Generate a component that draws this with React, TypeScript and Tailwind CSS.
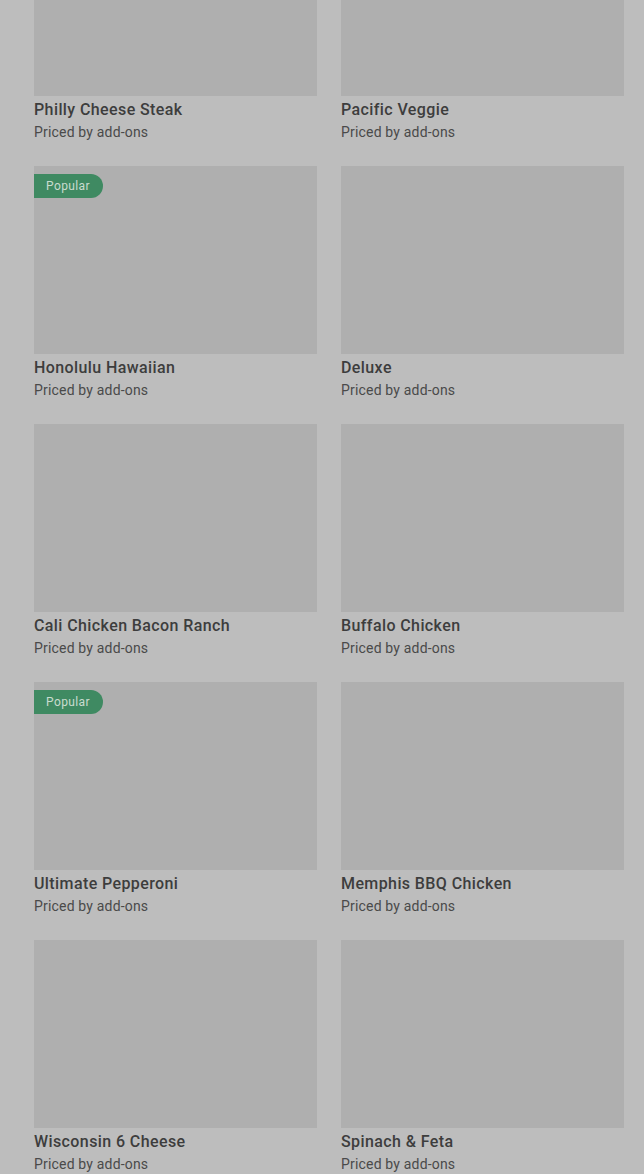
import React from "react";

const items = [
  { name: "Philly Cheese Steak", popular: false },
  { name: "Pacific Veggie", popular: false },
  { name: "Honolulu Hawaiian", popular: true },
  { name: "Deluxe", popular: false },
  { name: "Cali Chicken Bacon Ranch", popular: false },
  { name: "Buffalo Chicken", popular: false },
  { name: "Ultimate Pepperoni", popular: true },
  { name: "Memphis BBQ Chicken", popular: false },
  { name: "Wisconsin 6 Cheese", popular: false },
  { name: "Spinach & Feta", popular: false },
];

export default function App() {
  return (
    <div className="w-[644px] h-[1174px] overflow-hidden bg-[#bdbdbd] font-['Roboto',sans-serif]">
      <div className="mt-[-92px] pl-[34px] pr-[20px] grid grid-cols-2 gap-x-6 gap-y-6">
        {items.map((it) => (
          <div key={it.name} className="flex flex-col">
            <div className="relative h-[188px] bg-[#afafaf]">
              {it.popular && (
                <span className="absolute top-[8px] left-0 h-[24px] flex items-center pl-[12px] pr-[13px] rounded-r-full bg-[#3f8a62] text-[#c9dccf] text-[12px] tracking-[0.4px]">
                  Popular
                </span>
              )}
            </div>
            <div className="mt-[2px] text-[16px] leading-6 font-medium tracking-[0.4px] text-[#3d3d3d]">{it.name}</div>
            <div className="text-[14px] leading-5 tracking-[0.18px] text-[#4a4a4a]">Priced by add-ons</div>
          </div>
        ))}
      </div>
    </div>
  );
}
